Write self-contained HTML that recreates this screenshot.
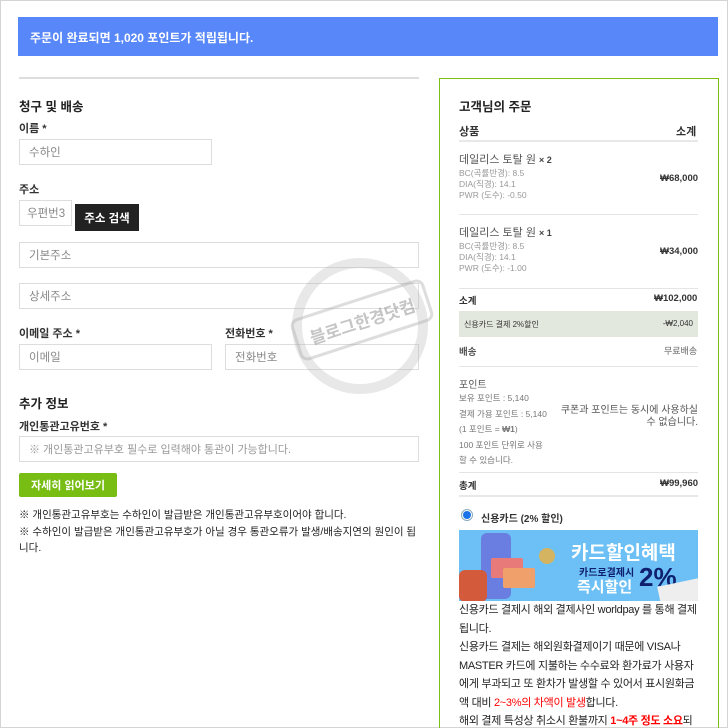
<!DOCTYPE html>
<html><head><meta charset="utf-8"><style>
*{box-sizing:border-box;margin:0;padding:0}
html,body{width:728px;height:728px;overflow:hidden;background:#fff}
body{font-family:"Liberation Sans","Noto Sans CJK KR",sans-serif;color:#222;position:relative}
.a{position:absolute}
.banner{left:18px;top:17px;width:700px;height:39px;background:#5787f9;color:#fff;font-size:12px;font-weight:bold;padding:12px 12px}
.h{font-size:12.5px;font-weight:bold;color:#222}
.lbl{font-size:11px;font-weight:bold;color:#333}
.in{border:1px solid #ddd;background:#fff;font-size:11.5px;color:#888;padding:0 9px;display:flex;align-items:center;white-space:nowrap;overflow:hidden}
.box{left:439px;top:78px;width:280px;height:660px;border:1px solid #7bbf14}
.s{font-size:8.5px;color:#999;line-height:11px}
.r{font-size:11px;font-weight:bold;color:#333}
.line{height:1px;background:#e5e5e5}
.t{font-size:11px;color:#222;line-height:18.5px;letter-spacing:-0.3px}
.red{color:#f00}
</style></head><body>
<div class="a" style="left:0;top:0;width:728px;height:728px;border:1px solid #d4d4d4"></div>
<div class="a banner">주문이 완료되면 1,020 포인트가 적립됩니다.</div>
<div class="a" style="left:19px;top:77px;width:400px;height:2px;background:#ddd"></div>

<div class="a h" style="left:19px;top:96px">청구 및 배송</div>
<div class="a lbl" style="left:19px;top:120px">이름 *</div>
<div class="a in" style="left:19px;top:139px;width:193px;height:26px">수하인</div>
<div class="a lbl" style="left:19px;top:181px">주소</div>
<div class="a in" style="left:19px;top:200px;width:53px;height:26px;padding:0 7px">우편번3</div>
<div class="a" style="left:75px;top:204px;width:64px;height:27px;background:#222;color:#fff;font-size:11.5px;font-weight:bold;display:flex;align-items:center;justify-content:center">주소 검색</div>
<div class="a in" style="left:19px;top:242px;width:400px;height:26px">기본주소</div>
<div class="a in" style="left:19px;top:283px;width:400px;height:26px">상세주소</div>
<div class="a lbl" style="left:19px;top:325px">이메일 주소 *</div>
<div class="a lbl" style="left:225px;top:325px">전화번호 *</div>
<div class="a in" style="left:19px;top:344px;width:193px;height:26px">이메일</div>
<div class="a in" style="left:225px;top:344px;width:194px;height:26px">전화번호</div>

<div class="a" style="left:292px;top:258px;width:136px;height:136px;border-radius:50%;border:10px solid rgba(180,180,180,.3)"></div>
<div class="a" style="left:292px;top:298px;width:140px;height:44px;border:3px solid rgba(170,170,170,.4);border-radius:8px;transform:rotate(-18deg);color:rgba(150,150,150,.55);font-size:17px;font-weight:bold;display:flex;align-items:center;justify-content:center">블로그한경닷컴</div>

<div class="a h" style="left:19px;top:393px">추가 정보</div>
<div class="a lbl" style="left:19px;top:418px">개인통관고유번호 *</div>
<div class="a in" style="left:19px;top:436px;width:400px;height:26px;font-size:11px;color:#999">※ 개인통관고유부호 필수로 입력해야 통관이 가능합니다.</div>
<div class="a" style="left:19px;top:473px;width:98px;height:24px;background:#77bd14;border-radius:2px;color:#fff;font-size:11px;font-weight:bold;display:flex;align-items:center;justify-content:center">자세히 읽어보기</div>
<div class="a" style="left:19px;top:507px;width:405px;font-size:10.5px;color:#222;line-height:16.5px">※ 개인통관고유부호는 수하인이 발급받은 개인통관고유부호이어야 합니다.<br>※ 수하인이 발급받은 개인통관고유부호가 아닐 경우 통관오류가 발생/배송지연의 원인이 됩니다.</div>

<div class="a box"></div>
<div class="a h" style="left:459px;top:96px">고객님의 주문</div>
<div class="a r" style="left:459px;top:123px">상품</div>
<div class="a r" style="left:676px;top:123px">소계</div>
<div class="a" style="left:459px;top:140px;width:239px;height:2px;background:#e8e8e8"></div>
<div class="a" style="left:459px;top:151px;font-size:11px;color:#555">데일리스 토탈 원 <b style="font-size:9px;color:#444">× 2</b></div>
<div class="a s" style="left:459px;top:168px">BC(곡률반경): 8.5<br>DIA(직경): 14.1<br>PWR (도수): -0.50</div>
<div class="a r" style="left:660px;top:173px;font-size:9.5px">₩68,000</div>
<div class="a line" style="left:459px;top:214px;width:239px"></div>
<div class="a" style="left:459px;top:224px;font-size:11px;color:#555">데일리스 토탈 원 <b style="font-size:9px;color:#444">× 1</b></div>
<div class="a s" style="left:459px;top:241px">BC(곡률반경): 8.5<br>DIA(직경): 14.1<br>PWR (도수): -1.00</div>
<div class="a r" style="left:660px;top:246px;font-size:9.5px">₩34,000</div>
<div class="a line" style="left:459px;top:288px;width:239px"></div>
<div class="a r" style="left:459px;top:293px;font-size:9.5px">소계</div>
<div class="a r" style="left:654px;top:293px;font-size:9.5px">₩102,000</div>
<div class="a" style="left:459px;top:311px;width:239px;height:26px;background:#e3e8de;font-size:8px;color:#333;padding:8px 5px">신용카드 결제 2%할인<span style="position:absolute;right:5px">-₩2,040</span></div>
<div class="a" style="left:459px;top:344px;font-size:9.5px;color:#555;font-weight:bold">배송</div>
<div class="a" style="left:664px;top:344px;font-size:9px;color:#666">무료배송</div>
<div class="a line" style="left:459px;top:366px;width:239px"></div>
<div class="a" style="left:459px;top:376px;font-size:10px;color:#555">포인트</div>
<div class="a" style="left:459px;top:391px;font-size:8.5px;color:#777;line-height:15.5px">보유 포인트 : 5,140<br>결제 가용 포인트 : 5,140<br>(1 포인트 = <b>₩1</b>)<br><span style="line-height:13px">100 포인트 단위로 사용<br>할 수 있습니다.</span></div>
<div class="a" style="left:560px;top:405px;width:138px;text-align:right;font-size:10px;color:#555;line-height:12px">쿠폰과 포인트는 동시에 사용하실 수 없습니다.</div>
<div class="a line" style="left:459px;top:472px;width:239px"></div>
<div class="a r" style="left:459px;top:478px;font-size:9.5px">총계</div>
<div class="a r" style="left:660px;top:478px;font-size:9.5px">₩99,960</div>
<div class="a" style="left:459px;top:495px;width:239px;height:2px;background:#e8e8e8"></div>
<div class="a" style="left:463px;top:511px;width:8px;height:8px;border-radius:50%;background:#1a73e8;box-shadow:0 0 0 1px #fff,0 0 0 2px #8ab"></div>
<div class="a" style="left:481px;top:510px;font-size:10px;font-weight:bold;color:#333">신용카드 (2% 할인)</div>
<div class="a" style="left:459px;top:530px;width:239px;height:71px;background:#6cc0f5;overflow:hidden">
 <div class="a" style="left:22px;top:3px;width:30px;height:66px;border-radius:6px;background:#6a7de0"></div>
 <div class="a" style="left:32px;top:28px;width:32px;height:20px;background:#e87a7a;border-radius:2px"></div>
 <div class="a" style="left:44px;top:38px;width:32px;height:20px;background:#f0a06a;border-radius:2px"></div>
 <div class="a" style="left:0;top:40px;width:28px;height:32px;background:#d35a3a;border-radius:6px"></div>
 <div class="a" style="left:80px;top:18px;width:16px;height:16px;border-radius:50%;background:#d4b460"></div>
 <div class="a" style="left:112px;top:8px;font-size:19px;font-weight:bold;color:#fff">카드할인혜택</div>
 <div class="a" style="left:120px;top:34px;font-size:10px;font-weight:bold;color:#102070">카드로결제시</div>
 <div class="a" style="left:118px;top:46px;font-size:15px;font-weight:bold;color:#fff">즉시할인</div>
 <div class="a" style="left:180px;top:32px;font-size:26px;font-weight:bold;color:#102070">2%</div>
 <div class="a" style="left:200px;top:52px;width:45px;height:22px;background:#eee;transform:rotate(-12deg)"></div>
</div>
<div class="a t" style="left:459px;top:601px;width:240px">신용카드 결제시 해외 결제사인 worldpay 를 통해 결제됩니다.<br>신용카드 결제는 해외원화결제이기 때문에 VISA나 MASTER 카드에 지불하는 수수료와 환가료가 사용자에게 부과되고 또 환차가 발생할 수 있어서 표시원화금액 대비 <span class="red">2~3%의 차액이 발생</span>합니다.<br>해외 결제 특성상 취소시 환불까지 <b class="red">1~4주 정도 소요</b>되니 신중한 구매 부탁드립니다.</div>
</body></html>
